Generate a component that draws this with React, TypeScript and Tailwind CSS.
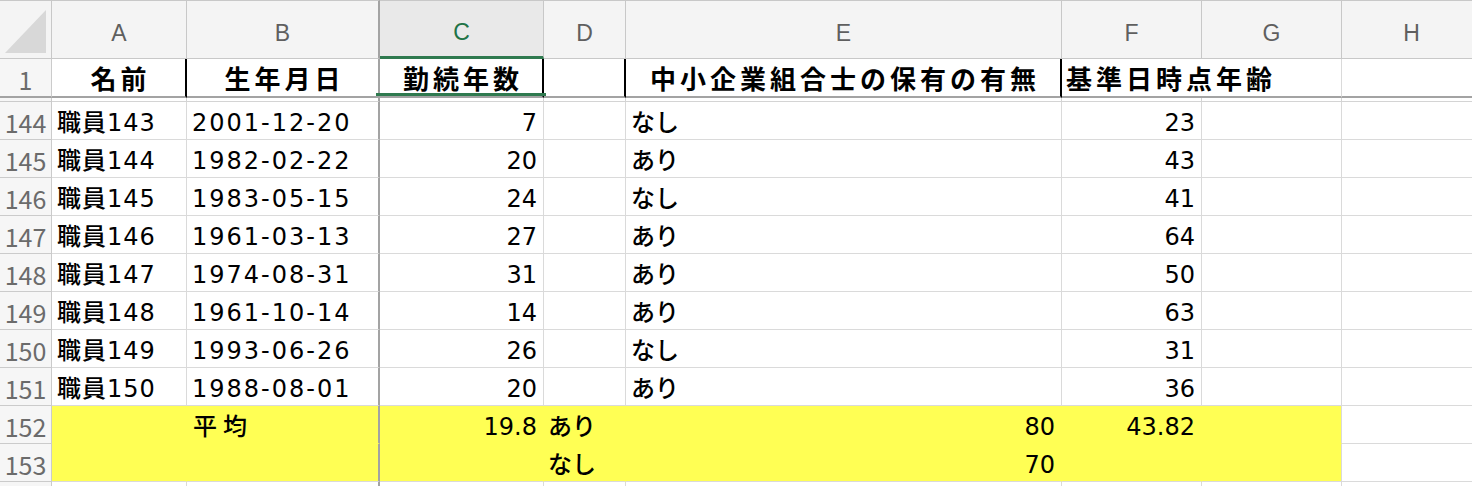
const COLS = ['A', 'B', 'C', 'D', 'E', 'F', 'G', 'H'];

const rows: [number, string, string, string, string, string][] = [
  [144, '職員143', '2001-12-20', '7', 'なし', '23'],
  [145, '職員144', '1982-02-22', '20', 'あり', '43'],
  [146, '職員145', '1983-05-15', '24', 'なし', '41'],
  [147, '職員146', '1961-03-13', '27', 'あり', '64'],
  [148, '職員147', '1974-08-31', '31', 'あり', '50'],
  [149, '職員148', '1961-10-14', '14', 'あり', '63'],
  [150, '職員149', '1993-06-26', '26', 'なし', '31'],
  [151, '職員150', '1988-08-01', '20', 'あり', '36'],
];

const font = "font-['DejaVu_Sans','Noto_Sans_CJK_JP',sans-serif] font-medium";
const cell = `h-[38px] border-b border-r border-[#dadada] flex items-center pt-[5px] text-[24px] text-black whitespace-nowrap overflow-hidden ${font}`;
const freeze = 'border-r-2 border-r-[#a3a3a3]';
const yellow = `h-[38px] bg-[#ffff54] flex items-center pt-[5px] text-[24px] text-black whitespace-nowrap ${font}`;
const head = "h-[39px] border-b-2 border-b-[#a3a3a3] border-r border-[#dadada] flex items-center pl-[4px] text-[26px] font-bold tracking-[4px] text-black whitespace-nowrap font-['Noto_Sans_CJK_JP',sans-serif]";

function RowHead({ n, h = 'h-[38px]' }: { n?: number; h?: string }) {
  return (
    <div
      className={`${h} border-b border-r border-[#cbcbcb] bg-[#f6f6f6] flex items-center justify-center pt-[4px] text-[25px] text-[#6b6b6b] font-['Noto_Sans_CJK_JP',sans-serif]`}
    >
      {n}
    </div>
  );
}

export default function App() {
  return (
    <div className="relative w-[1472px] h-[486px] overflow-hidden bg-white">
      <div className="grid grid-cols-[52px_135px_193px_164px_82px_436px_140px_140px_140px] w-[1482px]">
        {/* column headers */}
        <div className="h-[59px] border-t border-b border-r border-[#c8c8c8] bg-[#f4f4f4]">
          <svg width="51" height="57" viewBox="0 0 51 57">
            <polygon points="5,52 46,52 46,9" fill="#d8d8d8" />
          </svg>
        </div>
        {COLS.map((c) => (
          <div
            key={c}
            className={`h-[59px] border-t border-b border-r border-[#c8c8c8] flex items-center justify-center pt-2 text-[23px] font-['Liberation_Sans',sans-serif] ${
              c === 'C'
                ? 'bg-[#e9e9e9] text-[#217346] border-b-[3px] border-b-[#2f7a4f]'
                : 'bg-[#f4f4f4] text-[#5f5f5f]'
            } ${c === 'B' ? freeze : ''}`}
          >
            {c}
          </div>
        ))}

        {/* row 1 */}
        <RowHead n={1} h="h-[39px] border-b-2 border-b-[#a3a3a3]" />
        <div className={`${head} justify-center border-r-2 border-r-black`}>名前</div>
        <div className={`${head} justify-center ${freeze}`}>生年月日</div>
        <div className={`${head} justify-center border-r-2 border-r-black`}>勤続年数</div>
        <div className={`${head} border-r-2 border-r-black`} />
        <div className={`${head} justify-center border-r-2 border-r-black`}>中小企業組合士の保有の有無</div>
        <div className={`${head} col-span-2`}>基準日時点年齢</div>
        <div className={head} />

        {/* frozen pane gap */}
        <div className="h-[4px] border-b border-r border-[#cbcbcb] bg-[#f6f6f6]" />
        {COLS.map((c) => (
          <div key={c} className={`h-[4px] border-b border-r border-[#d4d4d4] ${c === 'B' ? freeze : ''}`} />
        ))}

        {/* data rows */}
        {rows.map(([n, name, birth, years, has, age]) => (
          <div key={n} className="contents">
            <RowHead n={n} />
            <div className={`${cell} pl-[5px] tracking-[1px]`}>{name}</div>
            <div className={`${cell} ${freeze} pl-[5px] tracking-[2px]`}>{birth}</div>
            <div className={`${cell} justify-end pr-[6px]`}>{years}</div>
            <div className={cell} />
            <div className={`${cell} pl-[5px]`}>{has}</div>
            <div className={`${cell} justify-end pr-[6px]`}>{age}</div>
            <div className={cell} />
            <div className={cell} />
          </div>
        ))}

        {/* summary rows */}
        <RowHead n={152} />
        <div className={`${yellow} border-b border-r border-[#ffff54]`} />
        <div className={`${yellow} border-b border-b-[#ffff54] ${freeze} pl-[6px] tracking-[6px]`}>平均</div>
        <div className={`${yellow} border-b border-r border-[#ffff54] justify-end pr-[6px]`}>19.8</div>
        <div className={`${yellow} border-b border-r border-[#ffff54] pl-[4px]`}>あり</div>
        <div className={`${yellow} border-b border-r border-[#ffff54] justify-end pr-[6px]`}>80</div>
        <div className={`${yellow} border-b border-r border-[#ffff54] justify-end pr-[6px]`}>43.82</div>
        <div className={`${yellow} border-b border-b-[#ffff54] border-r border-r-[#dadada]`} />
        <div className={cell} />

        <RowHead n={153} />
        <div className={`${yellow} border-b border-b-[#dadada] border-r border-r-[#ffff54]`} />
        <div className={`${yellow} border-b border-b-[#dadada] ${freeze}`} />
        <div className={`${yellow} border-b border-b-[#dadada] border-r border-r-[#ffff54]`} />
        <div className={`${yellow} border-b border-b-[#dadada] border-r border-r-[#ffff54] pl-[4px]`}>なし</div>
        <div className={`${yellow} border-b border-b-[#dadada] border-r border-r-[#ffff54] justify-end pr-[6px]`}>70</div>
        <div className={`${yellow} border-b border-b-[#dadada] border-r border-r-[#ffff54]`} />
        <div className={`${yellow} border-b border-b-[#dadada] border-r border-r-[#dadada]`} />
        <div className={cell} />

        {/* row 154, cut off */}
        <RowHead />
        {COLS.map((c) => (
          <div key={c} className={`${cell} ${c === 'B' ? freeze : ''}`} />
        ))}
      </div>

      {/* selected cell C1 */}
      <div className="absolute left-[376px] top-[93px] w-[170px] h-[3px] bg-[#2f7a4f]" />
    </div>
  );
}
